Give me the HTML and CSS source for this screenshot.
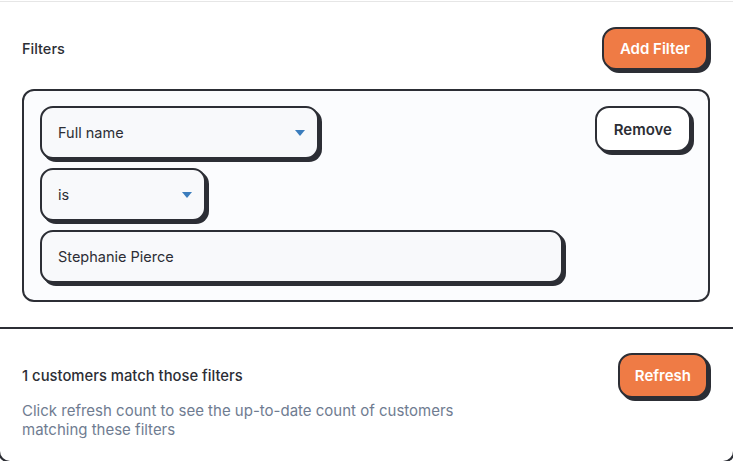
FILE: index.html
```html
<!DOCTYPE html>
<html>
<head>
<meta charset="utf-8">
<link rel="stylesheet" href="styles.css">
</head>
<body>
<div class="card">
  <section class="filters">
    <div class="head">
      <h2 class="title">Filters</h2>
      <button class="btn primary">Add Filter</button>
    </div>
    <div class="filter-box">
      <div class="fields">
        <div class="select wide"><span>Full name</span><span class="caret"></span></div>
        <div class="select narrow"><span>is</span><span class="caret"></span></div>
        <div class="input">Stephanie Pierce</div>
      </div>
      <button class="btn secondary">Remove</button>
    </div>
  </section>
  <section class="results">
    <div class="row">
      <p class="count">1 customers match those filters</p>
      <button class="btn primary">Refresh</button>
    </div>
    <p class="hint">Click refresh count to see the up-to-date count of customers<br>matching these filters</p>
  </section>
</div>
</body>
</html>
```
FILE: styles.css
```css
html, body {
  margin: 0;
  padding: 0;
  overflow: hidden;
  background: #ffffff;
}
body {
  font-family: "Inter", "Liberation Sans", sans-serif;
  color: #2c2e35;
  padding-top: 1px;
}
.card {
  margin: 0 -2px;
  border: 2px solid #2c2e35;
  border-top: 1px solid #e6e6e6;
  border-radius: 0 0 12px 12px;
}
.filters {
  padding: 25px 23px 25px 22px;
}
.head {
  display: flex;
  justify-content: space-between;
  align-items: center;
}
.title {
  margin: 0;
  font-size: 14.5px;
  font-weight: 500;
}
.btn {
  font-family: inherit;
  font-weight: 600;
  font-size: 15px;
  border: 2px solid #2c2e35;
  border-radius: 14px;
  box-shadow: 3px 3px 0 0 #2c2e35;
  padding: 0 17px;
  cursor: pointer;
}
.primary {
  background: #ef7b45;
  color: #ffffff;
}
.head .primary {
  height: 43px;
  padding: 0 16px;
  margin-right: 2px;
}
.filter-box {
  margin-top: 19px;
  border: 2px solid #2c2e35;
  border-radius: 12px;
  background: #fbfcfe;
  padding: 15px 17px 17px 16px;
  display: flex;
  justify-content: space-between;
  align-items: flex-start;
}
.fields {
  display: flex;
  flex-direction: column;
  gap: 9px;
}
.select, .input {
  box-sizing: border-box;
  height: 53px;
  border: 2px solid #2c2e35;
  border-radius: 13px;
  background: #f8f9fb;
  box-shadow: 3px 3px 0 0 #2c2e35;
  display: flex;
  align-items: center;
  justify-content: space-between;
  padding: 0 12px 0 16px;
  font-size: 14.5px;
  color: #2c2e35;
}
.wide { width: 279px; }
.narrow { width: 166px; }
.input { width: 523px; }
.caret {
  width: 0;
  height: 0;
  border-left: 5px solid transparent;
  border-right: 5px solid transparent;
  border-top: 6px solid #3b7dbd;
}
.secondary {
  background: #ffffff;
  color: #2c2e35;
  height: 46px;
}
.results {
  border-top: 2px solid #2c2e35;
  padding: 24px 23px 22px 22px;
}
.row {
  display: flex;
  justify-content: space-between;
  align-items: center;
}
.row .primary {
  height: 45px;
  padding: 0 15px;
  margin-right: 2px;
}
.count {
  margin: 0;
  font-size: 14.8px;
  font-weight: 500;
}
.hint {
  margin: 3px 0 0;
  font-size: 15px;
  line-height: 19px;
  color: #6f7c91;
}
```
